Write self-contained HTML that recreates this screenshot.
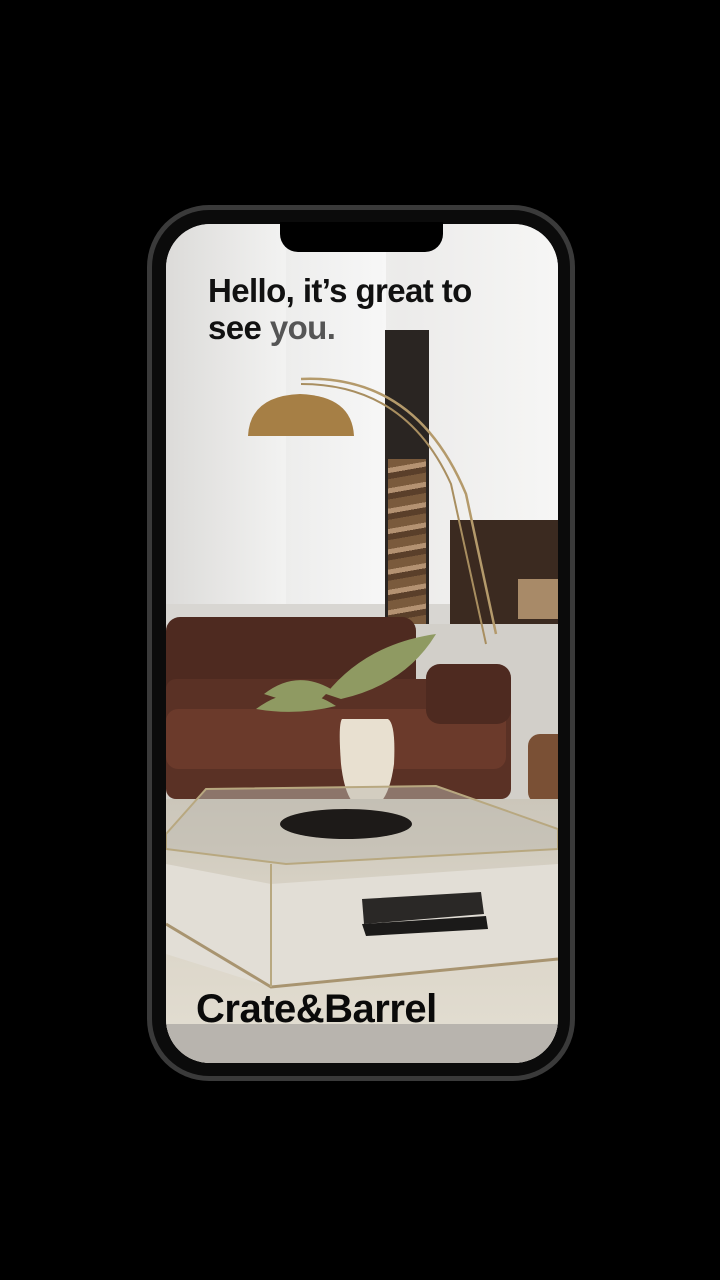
<!DOCTYPE html>
<html><head><meta charset="utf-8"><style>
html,body{margin:0;padding:0;background:#000;width:720px;height:1280px;overflow:hidden}
.phone{position:absolute;left:147px;top:205px;width:428px;height:876px;border-radius:62px;background:#3a3a3a}
.bez{position:absolute;left:5px;top:5px;right:5px;bottom:5px;border-radius:57px;background:#0b0b0b}
.scr{position:absolute;left:166px;top:224px;width:392px;height:839px;border-radius:44px;overflow:hidden;background:#e9e8e6}
.a{position:absolute}
.notch{position:absolute;left:280px;top:222px;width:163px;height:30px;background:#000;border-radius:0 0 18px 18px}
.t{position:absolute;left:208px;top:272px;font:bold 33px/37px "Liberation Sans",sans-serif;color:#111;letter-spacing:-0.6px}
.logo{position:absolute;left:196px;top:988px;font:bold 40px/42px "Liberation Sans",sans-serif;color:#0a0a0a;letter-spacing:-0.5px}
</style></head><body>
<div class="phone"><div class="bez"></div></div>
<div class="scr">
 <div class="a" style="left:0;top:0;width:392px;height:400px;background:linear-gradient(90deg,#dcdbd9,#f2f2f1 30%,#ecebea 60%,#f6f6f5)"></div>
 <div class="a" style="left:120px;top:0;width:100px;height:400px;background:linear-gradient(90deg,#ededec,#f7f7f7)"></div>
 <div class="a" style="left:0;top:380px;width:392px;height:240px;background:#d8d6d2"></div>
 <div class="a" style="left:219px;top:106px;width:44px;height:300px;background:#2a2522"></div>
 <div class="a" style="left:222px;top:235px;width:38px;height:170px;background:repeating-linear-gradient(170deg,#7a5a3c 0 9px,#b49272 9px 14px,#5a3f2a 14px 20px)"></div>
 <div class="a" style="left:284px;top:296px;width:108px;height:130px;background:#3b2a20"></div>
 <div class="a" style="left:352px;top:355px;width:40px;height:40px;background:#a88a68"></div>
 <div class="a" style="left:0;top:400px;width:392px;height:230px;background:#d2cfc9"></div>
 <div class="a" style="left:0;top:393px;width:250px;height:80px;background:#4e2a20;border-radius:14px 14px 4px 4px"></div>
 <div class="a" style="left:0;top:455px;width:345px;height:120px;background:#5a3125;border-radius:10px"></div>
 <div class="a" style="left:0;top:485px;width:340px;height:60px;background:#6b3a2b;border-radius:12px"></div>
 <div class="a" style="left:260px;top:440px;width:85px;height:60px;background:#4e2a20;border-radius:14px"></div>
 <div class="a" style="left:362px;top:510px;width:30px;height:70px;background:#7a5035;border-radius:12px 0 0 12px"></div>
 <svg class="a" style="left:0;top:0" width="392" height="839">
  <path d="M135 155 Q250 150 300 270 L330 410" stroke="#b49a6b" stroke-width="2.5" fill="none"/>
  <path d="M135 160 Q240 160 285 260 L320 420" stroke="#a88e60" stroke-width="2" fill="none"/>
  <path d="M82 212 Q84 172 134 170 Q186 172 188 212 Z" fill="#a67f45"/>
  <path d="M98 470 Q130 445 165 465 L145 485 Z M160 470 Q200 420 270 410 Q240 460 175 475 Z M90 485 Q130 455 170 482 Q130 492 90 485Z" fill="#8f9a62"/>
  <path d="M176 495 Q172 500 175 540 Q180 585 200 585 Q222 585 228 540 Q230 500 222 495 Z" fill="#e8e0d0"/>
 </svg>
 <div class="a" style="left:0;top:575px;width:392px;height:264px;background:linear-gradient(180deg,#cbc6ba,#d9d3c6 40%,#e4dfd3)"></div>
 <div class="a" style="left:0;top:800px;width:392px;height:39px;background:#b8b4ae"></div>
 <svg class="a" style="left:0;top:0" width="392" height="839">
  <path d="M0 610 L40 565 L270 562 L392 605 L392 625 L120 640 L0 625Z" fill="rgba(190,185,175,0.5)" stroke="#b8a880" stroke-width="2"/>
  <path d="M0 640 L0 730 L105 763 L392 735 L392 640 L105 660Z" fill="#e2ded6"/>
  <path d="M0 700 L105 763 L392 735" stroke="#a89470" stroke-width="3" fill="none"/>
  <line x1="105" y1="640" x2="105" y2="763" stroke="#b8a880" stroke-width="2"/>
  <ellipse cx="180" cy="600" rx="66" ry="15" fill="#1d1a18"/>
  <path d="M196 675 L315 668 L318 690 L198 700Z" fill="#2a2826"/>
  <path d="M196 700 L320 692 L322 705 L200 712Z" fill="#1b1a19"/>
 </svg>
</div>
<div class="notch"></div>
<div class="t">Hello, it’s great to<br>see <span style="color:#555">you.</span></div>
<div class="logo">Crate&amp;Barrel</div>
</body></html>
